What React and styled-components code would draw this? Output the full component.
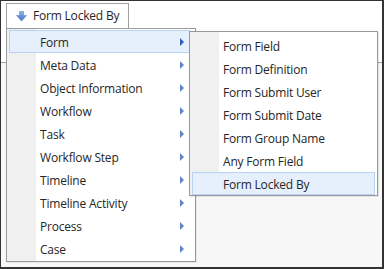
import React from "react";
import styled, { createGlobalStyle } from "styled-components";

const GlobalStyle = createGlobalStyle`
	html, body {
		margin: 0;
		padding: 0;
		background: #ffffff;
	}
	* {
		box-sizing: border-box;
	}
`;

const mainItems = [
	"Form",
	"Meta Data",
	"Object Information",
	"Workflow",
	"Task",
	"Workflow Step",
	"Timeline",
	"Timeline Activity",
	"Process",
	"Case"
];

const formItems = [
	"Form Field",
	"Form Definition",
	"Form Submit User",
	"Form Submit Date",
	"Form Group Name",
	"Any Form Field",
	"Form Locked By"
];

function DownArrow() {
	return (
		<svg width="11" height="11" viewBox="0 0 11 11">
			<defs>
				<linearGradient id="arrowFill" x1="0" y1="0" x2="0" y2="1">
					<stop offset="0" stopColor="#8fb6ec" />
					<stop offset="1" stopColor="#3f6fc4" />
				</linearGradient>
			</defs>
			<path d="M3.5 0.5 H7.5 V4.5 H10.5 L5.5 10 L0.5 4.5 H3.5 Z" fill="url(#arrowFill)" stroke="#5a86cf" strokeWidth="0.6" />
		</svg>
	);
}

function MenuRow({ label, active, arrow, children }) {
	return (
		<Item $active={active}>
			<Label>{label}</Label>
			{arrow && <Caret $active={active} />}
			{children}
		</Item>
	);
}

export default function App() {
	return (
		<>
			<GlobalStyle />
			<Frame>
				<Toolbar>
					<Tab>
						<DownArrow />
						<TabText>Form Locked By</TabText>
					</Tab>
				</Toolbar>
				<MainMenu>
					{mainItems.map((label, i) => (
						<MenuRow key={label} label={label} active={i === 0} arrow>
							{i === 0 && (
								<SubMenu>
									{formItems.map((sub, j) => (
										<MenuRow key={sub} label={sub} active={j === formItems.length - 1} />
									))}
								</SubMenu>
							)}
						</MenuRow>
					))}
				</MainMenu>
			</Frame>
		</>
	);
}

const Frame = styled.div`
	position: relative;
	width: 384px;
	height: 269px;
	border-style: solid;
	border-color: #333333;
	border-width: 1px 2px 2px 1px;
	background: #f7f7f7;
	font-family: "Open Sans", "Noto Sans", sans-serif;
	font-size: 12px;
	color: #262626;
`;

const Toolbar = styled.div`
	height: 62px;
	background: #ffffff;
	border-bottom: 1px solid #a0a0a0;
	padding: 2px 0 0 5px;
`;

const Tab = styled.div`
	display: flex;
	align-items: center;
	gap: 6px;
	width: 123px;
	height: 28px;
	padding: 0 0 2px 9px;
	border: 1px solid #a0a0a0;
	background: #ffffff;
`;

const TabText = styled.span`
	line-height: 1;
	letter-spacing: -0.2px;
`;

const MainMenu = styled.div`
	position: absolute;
	left: 5px;
	top: 27px;
	width: 190px;
	padding: 1px 5px 1px 2px;
	border: 1px solid #999999;
	background: linear-gradient(to right, #f0f0f0 0 29px, #ffffff 29px);
	box-shadow: 1px 1px 0 rgba(0, 0, 0, 0.06);
`;

const SubMenu = styled.div`
	position: absolute;
	left: 179px;
	top: 0;
	width: 189px;
	padding: 2px 2px 0 2px;
	border: 1px solid #999999;
	background: linear-gradient(to right, #f0f0f0 0 29px, #ffffff 29px);
	box-shadow: 1px 1px 0 rgba(0, 0, 0, 0.08);
	z-index: 2;
`;

const Item = styled.div`
	position: relative;
	display: flex;
	align-items: center;
	height: 23px;
	padding: 1px 5px 0 30px;
	border: 1px solid ${(p) => (p.$active ? "#b9d2f3" : "transparent")};
	background: ${(p) => (p.$active ? "#e6f0fd" : "transparent")};
`;

const Label = styled.span`
	flex: 1;
	white-space: nowrap;
	letter-spacing: -0.2px;
`;

const Caret = styled.span`
	width: 0;
	height: 0;
	border-top: 4px solid transparent;
	border-bottom: 4px solid transparent;
	border-left: 4px solid ${(p) => (p.$active ? "#2f5fc0" : "#5f85c8")};
`;
